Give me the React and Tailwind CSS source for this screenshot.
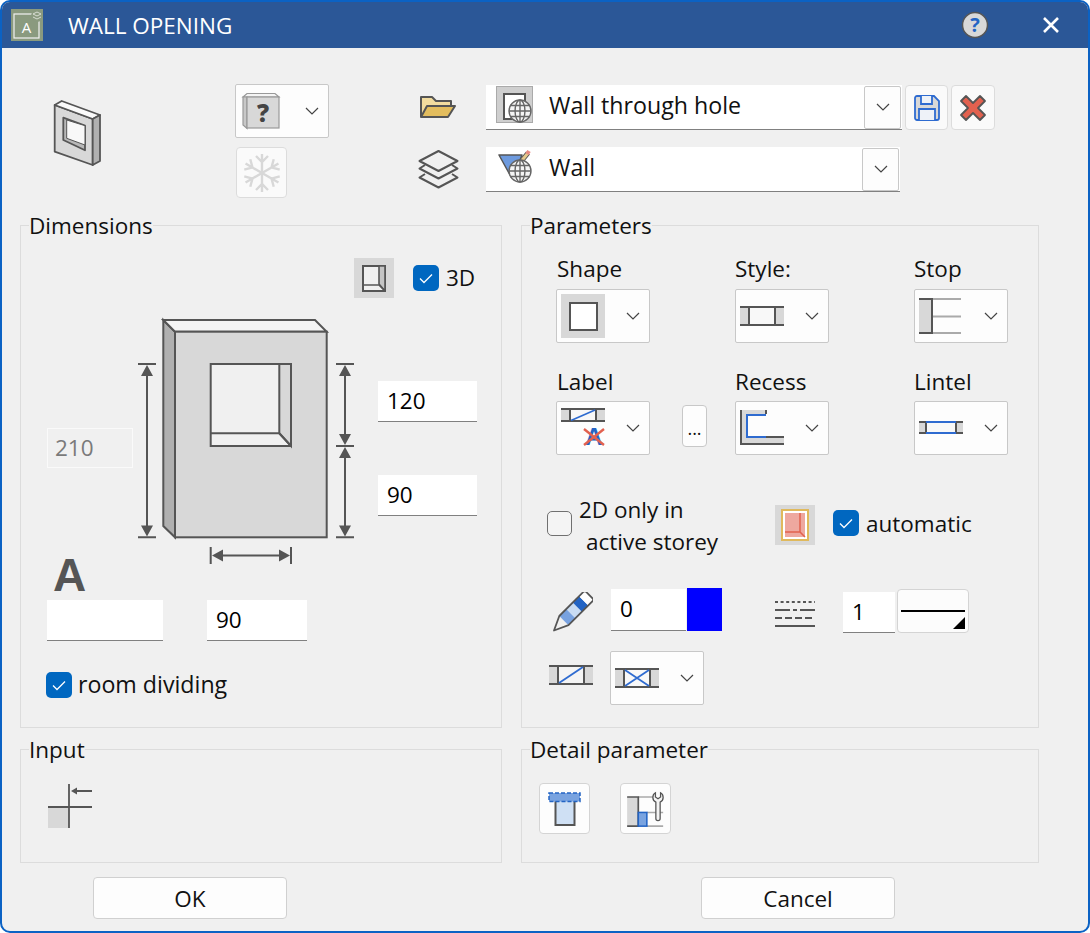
import React from 'react';

const Chevron = () => (
  <svg width="14" height="8" viewBox="0 0 14 8" className="shrink-0">
    <path d="M1 1l6 6 6-6" fill="none" stroke="#444" strokeWidth="1.2" />
  </svg>
);

const Check = ({ className = '' }) => (
  <span className={`w-[26px] h-[26px] shrink-0 rounded-[5px] bg-[#0067c0] flex items-center justify-center ${className}`}>
    <svg width="14" height="11" viewBox="0 0 14 11">
      <path d="M1 5.5l4 4 8-8" fill="none" stroke="#fff" strokeWidth="1.3" />
    </svg>
  </span>
);

const Dropdown = ({ children, className = '' }) => (
  <div className={`w-[94px] h-[54px] shrink-0 bg-[#fdfdfd] border border-[#c8c8c8] rounded-[2px] flex items-center justify-between pr-[9px] ${className}`}>
    {children}
    <Chevron />
  </div>
);

const Field = ({ value, className = '' }) => (
  <div className={`h-[41px] shrink-0 bg-white border-b border-[#808080] pl-[9px] leading-[40px] text-black ${className}`}>{value}</div>
);

const Panel = ({ title, className = '', children }) => (
  <fieldset className={`border border-[#dcdcdc] ${className}`}>
    <legend className="ml-2 h-[30px] leading-[32px] text-[#111]">{title}</legend>
    {children}
  </fieldset>
);

const Globe = ({ cx, cy, r = 11 }) => (
  <g fill="none" stroke="#666" strokeWidth="1.4">
    <circle cx={cx} cy={cy} r={r} fill="#f4f4f4" />
    <ellipse cx={cx} cy={cy} rx={r * 0.45} ry={r} />
    <path d={`M${cx} ${cy - r}v${r * 2}M${cx - r} ${cy}h${r * 2}M${cx - r * 0.87} ${cy - r * 0.5}h${r * 1.74}M${cx - r * 0.87} ${cy + r * 0.5}h${r * 1.74}`} />
  </g>
);

export default function App() {
  return (
    <div className="w-[1090px] h-[933px] overflow-hidden rounded-[10px] border-2 border-[#0b62c4] bg-[#f0f0f0] font-['Open_Sans',sans-serif] text-[22.5px] text-[#111]">
      {/* title bar */}
      <div className="h-[46px] bg-[#2b5797] flex items-center text-white">
        <svg width="32" height="32" viewBox="0 0 32 32" className="ml-[9px] shrink-0">
          <rect width="32" height="32" fill="#8a9a7f" />
          <rect x="3" y="5" width="25" height="24" fill="none" stroke="#f2f2f2" strokeWidth="1.2" />
          <text x="15.5" y="24" fontSize="15" fill="#fff" textAnchor="middle">A</text>
          <circle cx="26" cy="7" r="6" fill="#8a9a7f" />
          <path d="M22 5l4-2 4 2-4 2zM22 8l4 2 4-2" fill="none" stroke="#d8ddd2" strokeWidth="1" />
        </svg>
        <span className="ml-[25px] w-[170px] shrink-0 mt-[2px] whitespace-nowrap">WALL OPENING</span>
        <svg width="28" height="28" viewBox="0 0 28 28" className="ml-[723px] shrink-0">
          <circle cx="14" cy="14" r="12.5" fill="#d8d8d8" stroke="#555" strokeWidth="1.5" />
          <text x="14" y="21" fontSize="20" fontWeight="700" fill="#2364c4" textAnchor="middle">?</text>
        </svg>
        <svg width="18" height="18" viewBox="0 0 18 18" className="ml-[53px] shrink-0">
          <path d="M2 2l14 14M16 2L2 16" stroke="#fff" strokeWidth="2.6" />
        </svg>
      </div>

      {/* top selectors */}
      <div className="h-[162px] flex items-start">
        <svg width="55" height="70" viewBox="0 0 55 70" className="ml-[48px] mt-[50px] shrink-0">
          <g stroke="#555" strokeWidth="1.8" strokeLinejoin="round">
            <path d="M4.700 7L42.700 21V67L4.700 53.700z" fill="#d8d8d8" />
            <path d="M4.700 7L11.700 3L50 17L42.700 21z" fill="#fafafa" />
            <path d="M42.700 21L50 17V63L42.700 67z" fill="#b0b0b0" />
            <path d="M13.300 19.700L35 27.700V52.300L13.300 42z" fill="#b8b8b8" />
            <path d="M16.700 22L35 27.700V47L16.700 40.300z" fill="#f8f8f8" strokeWidth="1" />
          </g>
        </svg>
        <div className="ml-[130px] mt-9 flex flex-col shrink-0">
          <Dropdown>
            <svg width="42" height="40" viewBox="240 91 42 40" className="ml-[3px] shrink-0">
              <path d="M244 97l4-3.500h28l4 3.500z" fill="#f4f4f4" stroke="#999" strokeWidth="1.2" />
              <path d="M244 97v28l4 3.500V97z" fill="#c8c8c8" stroke="#999" strokeWidth="1.2" />
              <rect x="248" y="97" width="32" height="31" fill="#d8d8d8" stroke="#999" strokeWidth="1.2" />
              <text x="264" y="122" fontSize="24" fontWeight="800" fill="#444" textAnchor="middle">?</text>
            </svg>
          </Dropdown>
          <div className="ml-px mt-[9px] w-[51px] h-[51px] bg-[#fafafa] border border-[#dcdcdc] rounded-[4px] flex items-center justify-center">
            <svg width="40" height="40" viewBox="-20 -20 40 40">
              <g fill="none" stroke="#d8d8d8" strokeWidth="2.4">
                {[0, 60, 120].map((a) => (
                  <g key={a} transform={`rotate(${a})`}>
                    <path d="M0-19V19M-6-17L0-11L6-17M-6 17L0 11L6 17" />
                  </g>
                ))}
              </g>
            </svg>
          </div>
        </div>
        <div className="ml-[89px] mt-[47px] flex flex-col shrink-0 w-[41px]">
          <svg width="38" height="24" viewBox="419 97 38 24" className="ml-px">
            <path d="M421 119V99h11l4 4h15v5" fill="#f2dc9f" stroke="#555" strokeWidth="2" strokeLinejoin="round" />
            <path d="M421 119l6-11h28l-7 11z" fill="#e3bd5e" stroke="#555" strokeWidth="2" strokeLinejoin="round" />
          </svg>
          <svg width="42" height="40" viewBox="418 151 42 40" className="mt-[30px]">
            <g fill="none" stroke="#555" strokeWidth="2" strokeLinejoin="round">
              <path d="M438.500 153l19 10-19 10-19-10z" />
              <path d="M425 167l-5.500 3.500 19 10 19-10-5.500-3.500" />
              <path d="M425 176l-5.500 3.500 19 10 19-10-5.500-3.500" />
            </g>
          </svg>
        </div>
        <div className="ml-[27px] mt-[37px] flex flex-col shrink-0 text-[23.2px]">
          <div className="flex items-start">
            <div className="w-[416px] h-[45px] bg-white border-b border-[#808080] flex items-center">
              <svg width="38" height="38" viewBox="496 87 38 38" className="ml-[10px] -mt-[5px] shrink-0">
                <rect x="496.500" y="87.500" width="36" height="36" fill="#cfcfcf" stroke="#aaa" />
                <rect x="504" y="95" width="21" height="25" fill="#fff" stroke="#555" strokeWidth="2" />
                <Globe cx={520} cy={112} />
              </svg>
              <span className="ml-[15px] -mt-1 flex-1">Wall through hole</span>
              <span className="w-[37px] h-[43px] mr-px bg-[#fdfdfd] border border-[#c8c8c8] rounded-[2px] flex items-center justify-center"><Chevron /></span>
            </div>
            <button className="ml-[3px] w-[43px] h-[45px] bg-[#fafafa] border border-[#dcdcdc] rounded-[4px] flex items-center justify-center">
              <svg width="28" height="28" viewBox="0 0 28 28">
                <path d="M2 4a2 2 0 0 1 2-2h17l5 5v17a2 2 0 0 1-2 2H4a2 2 0 0 1-2-2z" fill="#d8d8d8" stroke="#2e6bd0" strokeWidth="1.8" />
                <path d="M8 2v8h11V2M6 26V15h16v11" fill="#eef2f8" stroke="#2e6bd0" strokeWidth="1.8" />
              </svg>
            </button>
            <button className="ml-[3px] w-[44px] h-[45px] bg-[#fafafa] border border-[#dcdcdc] rounded-[4px] flex items-center justify-center">
              <svg width="30" height="30" viewBox="0 0 30 30">
                <path d="M3 8l5-5 7 7 7-7 5 5-7 7 7 7-5 5-7-7-7 7-5-5 7-7z" fill="#e2614f" stroke="#555" strokeWidth="1.8" strokeLinejoin="round" />
              </svg>
            </button>
          </div>
          <div className="mt-[17px] w-[414px] h-[45px] bg-white border-b border-[#808080] flex items-center">
            <svg width="38" height="40" viewBox="496 151 38 40" className="ml-[10px] shrink-0">
              <path d="M499 157h23l-8 20h-4z" fill="#6d9ade" stroke="#555" strokeWidth="1.5" strokeLinejoin="round" />
              <path d="M519 166l9-11" stroke="#555" strokeWidth="5" />
              <path d="M519 166l9-11" stroke="#e5c98b" strokeWidth="3" />
              <path d="M527 156l2-3" stroke="#e88a80" strokeWidth="4" />
              <Globe cx={520} cy={173} />
            </svg>
            <span className="ml-[15px] -mt-1 flex-1">Wall</span>
            <span className="w-[37px] h-[43px] mr-px bg-[#fdfdfd] border border-[#c8c8c8] rounded-[2px] flex items-center justify-center"><Chevron /></span>
          </div>
        </div>
      </div>

      <div className="ml-[18px] grid grid-cols-[482px_518px] gap-x-[19px] gap-y-[6px]">
        <Panel title="Dimensions" className="h-[518px]">
          <div className="pt-[18px] pl-[333px] flex items-center">
            <span className="w-10 h-10 shrink-0 bg-[#d8d8d8] flex items-center justify-center">
              <svg width="26" height="28" viewBox="361 263 26 28">
                <path d="M363 265h22v25h-22z" fill="#f0f0f0" stroke="#555" strokeWidth="2" />
                <path d="M379 265h6v25l-6-7z" fill="#c4c4c4" stroke="#555" strokeWidth="1.6" />
                <path d="M363 284h16l6 6" fill="none" stroke="#555" strokeWidth="1.6" />
              </svg>
            </span>
            <Check className="ml-[19px]" />
            <span className="ml-[7px]">3D</span>
          </div>
          <div className="mt-[18px] h-[240px] flex items-start">
            <div className="ml-[26px] mt-[112px] w-[86px] h-10 shrink-0 border border-[#fafafa] pl-[7px] leading-[38px] text-[#7a7a7a]">210</div>
            <svg width="222" height="252" viewBox="136 316 222 252" className="ml-[3px] shrink-0">
              <g stroke="#555" strokeWidth="2">
                <path d="M163.300 320L175 331.700V537.300L163.300 526z" fill="#b0b0b0" />
                <path d="M163.300 320H315L326.700 331.700H175z" fill="#f4f4f4" />
                <rect x="175" y="331.700" width="151.700" height="205.600" fill="#d8d8d8" />
                <rect x="210.700" y="364" width="80.300" height="82" fill="#f0f0f0" />
                <path d="M279.300 364H291V446L279.300 433.300z" fill="#d8d8d8" />
                <path d="M210.700 433.300H279.300L291 446" fill="none" />
                <path d="M138 364h18M138 537.300h18M147 372v157M336 364h18M336 446h18M336 537.300h18M345 372v66M345 454v75M210.700 547v17M291 547v17M219 555.500h64" fill="none" />
              </g>
              <g fill="#555">
                <path d="M147 365l6 11h-12zM147 536.500l6-11h-12zM345 365l6 11h-12zM345 445l6-11h-12zM345 447l6 11h-12zM345 536.500l6-11h-12zM212 555.500l11-6v12zM290 555.500l-11-6v12z" />
              </g>
            </svg>
            <div className="ml-5 mt-[65px] flex flex-col gap-[53px] shrink-0">
              <Field value="120" className="w-[99px]" />
              <Field value="90" className="w-[99px]" />
            </div>
          </div>
          <div className="flex items-start">
            <div className="ml-[26px] w-[116px] shrink-0">
              <div className="h-11 pl-[6px] text-[46px] leading-[38px] font-bold text-[#555] font-['Liberation_Sans',sans-serif]">A</div>
              <Field value="" />
            </div>
            <Field value="90" className="ml-[44px] mt-11 w-[100px]" />
          </div>
          <div className="ml-[25px] mt-[28px] flex items-center text-[23.2px]">
            <Check />
            <span className="ml-[6px] -mt-[2px]">room dividing</span>
          </div>
        </Panel>

        <Panel title="Parameters" className="h-[518px]">
          <div className="pl-[34px] pt-[15px] grid grid-cols-[179px_179px_1fr] gap-y-6">
            <div>
              <div className="h-[34px] pl-px leading-[28px]">Shape</div>
              <Dropdown>
                <svg width="44" height="44" viewBox="561 294 44 44" className="ml-[4px] shrink-0">
                  <rect x="561" y="294" width="44" height="44" fill="#d8d8d8" />
                  <rect x="570" y="303" width="27" height="27" fill="#fff" stroke="#555" strokeWidth="2" />
                </svg>
              </Dropdown>
            </div>
            <div>
              <div className="h-[34px] leading-[28px]">Style:</div>
              <Dropdown>
                <svg width="44" height="22" viewBox="740 305 44 22" className="ml-[4px] shrink-0">
                  <path d="M740 307h44v18h-44z" fill="#d8d8d8" />
                  <path d="M749 307h26v18h-26z" fill="#f8f8f8" />
                  <path d="M740 307h44M740 325h44M749 307v18M775 307v18" stroke="#555" strokeWidth="2" fill="none" />
                </svg>
              </Dropdown>
            </div>
            <div>
              <div className="h-[34px] leading-[28px]">Stop</div>
              <Dropdown>
                <svg width="44" height="36" viewBox="919 298 44 36" className="ml-[4px] shrink-0">
                  <path d="M919 299h13v34h-13z" fill="#d8d8d8" />
                  <path d="M932 299h29M932 316.500h29M932 333h29" stroke="#aaa" strokeWidth="2" />
                  <path d="M919 299h13v34h-13" stroke="#555" strokeWidth="2" fill="none" />
                </svg>
              </Dropdown>
            </div>
            <div>
              <div className="h-[34px] pl-px leading-[30px]">Label</div>
              <div className="flex items-end">
                <Dropdown>
                  <svg width="46" height="42" viewBox="561 407 46 42" className="ml-[4px] shrink-0">
                    <rect x="561" y="409" width="44" height="12" fill="#d8d8d8" />
                    <rect x="570" y="409" width="26" height="12" fill="#f8f8f8" />
                    <path d="M561 409h44M561 421h44M570 409v12M596 409v12" stroke="#555" strokeWidth="2" fill="none" />
                    <path d="M571 420.500l24-10.500" stroke="#2e6bd0" strokeWidth="1.600" />
                    <text x="594" y="445" fontSize="24" fontWeight="800" fill="#2364c4" textAnchor="middle" fontFamily="Liberation Sans">A</text>
                    <path d="M584 429l20 16M604 429l-20 16" stroke="#e2614f" strokeWidth="2.400" />
                  </svg>
                </Dropdown>
                <button className="ml-8 mb-2 w-[25px] h-[42px] bg-[#fdfdfd] border border-[#c8c8c8] rounded-[4px] text-[18px] leading-[44px]">...</button>
              </div>
            </div>
            <div>
              <div className="h-[34px] leading-[30px]">Recess</div>
              <Dropdown>
                <svg width="44" height="38" viewBox="740 413 44 38" className="ml-[4px] shrink-0">
                  <path d="M741 414h25v5h-19v22h37v8h-43z" fill="#d8d8d8" />
                  <path d="M741 414v35M741 448h43" stroke="#555" strokeWidth="2" fill="none" />
                  <path d="M766 419h-19v22h19" stroke="#2e6bd0" strokeWidth="2" fill="none" />
                  <path d="M766 441h18M766 414v4" stroke="#555" strokeWidth="2" fill="none" />
                </svg>
              </Dropdown>
            </div>
            <div>
              <div className="h-[34px] leading-[30px]">Lintel</div>
              <Dropdown>
                <svg width="44" height="14" viewBox="919 421 44 14" className="ml-[4px] shrink-0">
                  <rect x="919" y="422" width="44" height="11" fill="#d8d8d8" />
                  <rect x="926" y="422" width="30" height="11" fill="#f8f8f8" />
                  <path d="M919 422h7M919 433h7M956 422h7M956 433h7M926 422v11M956 422v11" stroke="#555" strokeWidth="2" fill="none" />
                  <path d="M926 422h30M926 433h30" stroke="#2e6bd0" strokeWidth="2" />
                </svg>
              </Dropdown>
            </div>
          </div>

          <div className="ml-[25px] mt-[38px] flex items-start">
            <span className="mt-[18px] w-[25px] h-[25px] shrink-0 rounded-[5px] border border-[#707070] bg-[#f4f4f4]" />
            <div className="ml-[7px] w-[196px] shrink-0 leading-[32px] mt-px">
              <div>2D only in</div>
              <div className="pl-[7px]">active storey</div>
            </div>
            <span className="mt-3 shrink-0">
              <svg width="40" height="40" viewBox="775 505 40 40" className="block">
                <rect x="775" y="505" width="40" height="40" fill="#d8d8d8" />
                <rect x="782" y="510" width="26" height="30" fill="#fff" stroke="#e0b95c" strokeWidth="2" />
                <rect x="785" y="513" width="20" height="24" fill="#eea89f" />
                <path d="M800 513v19M785 532h15l5 5" fill="none" stroke="#e2614f" strokeWidth="1.500" />
              </svg>
            </span>
            <Check className="ml-[18px] mt-[17px]" />
            <span className="ml-[7px] mt-[16px] leading-[30px]">automatic</span>
          </div>

          <div className="ml-[31px] mt-[30px] flex items-start">
            <svg width="40" height="40" viewBox="552 592 40 40" className="mt-1 shrink-0">
              <g transform="translate(553 630.500) rotate(-45)">
                <path d="M0 0L14-6.500V6.500z" fill="#f0f0f0" />
                <rect x="14" y="-6.500" width="10" height="13" fill="#78a2e0" />
                <rect x="24" y="-6.500" width="9" height="13" fill="#c9dcf3" />
                <rect x="33" y="-6.500" width="9" height="13" fill="#2364c4" />
                <rect x="42" y="-6.500" width="8" height="13" fill="#fff" />
                <path d="M0 0L14-6.500H48a2 2 0 0 1 2 2V4.500a2 2 0 0 1-2 2H14z" fill="none" stroke="#555" strokeWidth="1.800" strokeLinejoin="round" />
              </g>
            </svg>
            <Field value="0" className="ml-[18px] mt-px w-[75px] h-[42px]" />
            <span className="ml-px w-[35px] h-[43px] shrink-0 bg-[#0000ff]" />
            <svg width="40" height="28" viewBox="775 599 40 28" className="ml-[53px] mt-3 shrink-0">
              <g stroke="#555" strokeWidth="2" fill="none">
                <path d="M775 601h40" strokeDasharray="3 2.600" />
                <path d="M775 609h15M793 609h4M800 609h15" />
                <path d="M775 617h40" strokeDasharray="7 3" />
                <path d="M775 625h40" />
              </g>
            </svg>
            <Field value="1" className="ml-[28px] mt-1 w-[52px]" />
            <div className="ml-[2px] mt-px w-[72px] h-[44px] shrink-0 bg-[#fcfcfc] border border-[#d4d4d4] rounded-[4px] relative">
              <span className="block ml-[3px] mt-[20px] w-[64px] h-[2px] bg-black" />
              <svg width="12" height="12" viewBox="0 0 12 12" className="absolute right-[3px] bottom-[3px]">
                <path d="M12 0V12H0z" fill="#000" />
              </svg>
            </div>
          </div>

          <div className="ml-[27px] mt-[18px] flex items-start">
            <svg width="44" height="20" viewBox="549 665 44 20" className="mt-[14px] shrink-0">
              <rect x="549" y="666" width="44" height="18" fill="#d8d8d8" />
              <rect x="558" y="666" width="26" height="18" fill="#f4f4f4" />
              <path d="M549 666h44M549 684h44M558 666v18M584 666v18" stroke="#555" strokeWidth="2" fill="none" />
              <path d="M559 683l24-16" stroke="#2e6bd0" strokeWidth="1.800" />
            </svg>
            <Dropdown className="ml-[17px]">
              <svg width="44" height="20" viewBox="615 668 44 20" className="ml-[4px] shrink-0">
                <rect x="615" y="669" width="44" height="18" fill="#d8d8d8" />
                <rect x="624" y="669" width="26" height="18" fill="#f8f8f8" />
                <path d="M615 669h44M615 687h44M624 669v18M650 669v18" stroke="#555" strokeWidth="2" fill="none" />
                <path d="M625 670l24 16M649 670l-24 16" stroke="#2e6bd0" strokeWidth="1.800" />
              </svg>
            </Dropdown>
          </div>
        </Panel>

        <Panel title="Input" className="h-[129px]">
          <svg width="44" height="44" viewBox="48 784 44 44" className="ml-[27px] mt-5">
            <rect x="48" y="807" width="21" height="21" fill="#d8d8d8" />
            <path d="M48 807h44M69 784v44" stroke="#555" strokeWidth="1.800" fill="none" />
            <path d="M74 791h18" stroke="#555" strokeWidth="1.800" />
            <path d="M71 791l6-3.500v7z" fill="#555" />
          </svg>
        </Panel>

        <Panel title="Detail parameter" className="h-[129px]">
          <div className="ml-[17px] mt-[19px] flex gap-[30px]">
            <button className="w-[51px] h-[51px] bg-[#fdfdfd] border border-[#d4d4d4] rounded-[4px] flex items-center justify-center">
              <svg width="34" height="36" viewBox="547 791 34 36">
                <rect x="554.500" y="800" width="19" height="25" fill="#cfe0f4" stroke="#555" strokeWidth="2" />
                <rect x="548" y="793" width="31" height="8.500" fill="#79a3e0" stroke="#2364c4" strokeWidth="1.500" strokeDasharray="4 2" />
              </svg>
            </button>
            <button className="w-[51px] h-[51px] bg-[#fdfdfd] border border-[#d4d4d4] rounded-[4px] flex items-center justify-center">
              <svg width="44" height="36" viewBox="623 784 44 42">
                <rect x="623" y="791" width="13" height="34" fill="#d8d8d8" />
                <path d="M636 791h18M646 809h19M646 825h19" stroke="#aaa" strokeWidth="1.800" />
                <path d="M623 791h13v34h-13" stroke="#555" strokeWidth="2" fill="none" />
                <rect x="636" y="809" width="10" height="16" fill="#79a3e0" stroke="#2364c4" strokeWidth="1.800" />
                <path d="M656 786v5l3 2 3-2v-5c2 1 3 3 3 5.500 0 3-1.500 4.500-3.500 5.500v19a2 2 0 0 1-5 0V797c-2-1-3.500-2.500-3.500-5.500 0-2.500 1-4.500 3-5.500z" fill="#f4f4f4" stroke="#555" strokeWidth="1.500" />
              </svg>
            </button>
          </div>
        </Panel>
      </div>

      <div className="ml-[91px] mt-[14px] flex gap-[414px]">
        <button className="w-[194px] h-[42px] pt-[2px] bg-[#fdfdfd] border border-[#d0d0d0] rounded-[4px]">OK</button>
        <button className="w-[194px] h-[42px] pt-[2px] bg-[#fdfdfd] border border-[#d0d0d0] rounded-[4px]">Cancel</button>
      </div>
    </div>
  );
}
